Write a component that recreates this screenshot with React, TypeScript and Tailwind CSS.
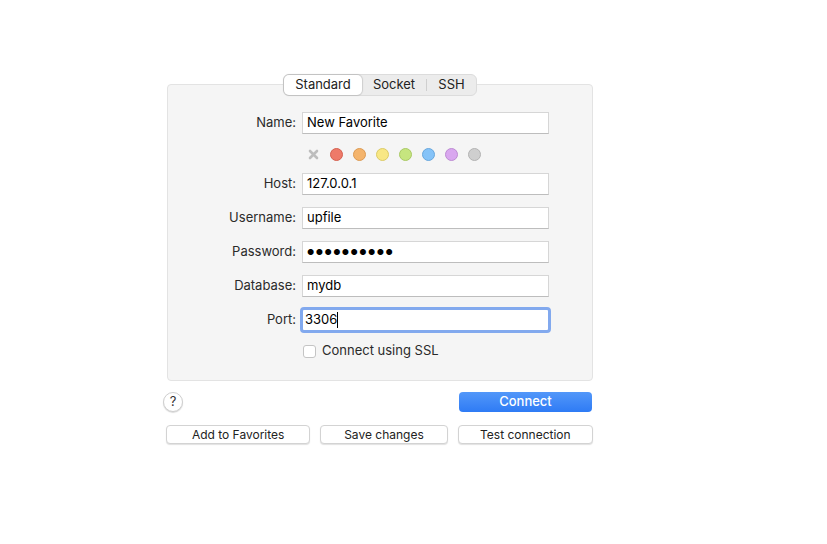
import { FC } from "react";

const swatches = [
  "bg-[#ee7a69] border-[#d5604f]",
  "bg-[#f4b46c] border-[#dc9a52]",
  "bg-[#f8e784] border-[#dccb66]",
  "bg-[#c6e57f] border-[#a9c964]",
  "bg-[#85c3f8] border-[#68a7dd]",
  "bg-[#d9a7ef] border-[#bd8bd3]",
  "bg-[#cfcfcf] border-[#b3b3b3]",
];

const Field: FC<{ label: string; value: string; focused?: boolean; password?: boolean }> = ({
  label,
  value,
  focused,
  password,
}) => (
  <div className="flex items-center h-[22px]">
    <div className="w-[129px] text-right pr-[1px] text-[13px] text-[#2a2a2a]">{label}</div>
    <div
      className={
        focused
          ? "ml-[5px] w-[247px] h-[22px] bg-white flex items-center pl-[3px] text-[13px] text-black rounded-[2px] outline-[3px] outline-[#82a9ee] outline -outline-offset-[1px]"
          : "ml-[5px] w-[247px] h-[22px] bg-white flex items-center pl-[4px] text-[13px] text-black border border-[#d6d6d6] border-b-[#bdbdbd]"
      }
    >
      {password ? (
        <span className="text-[8px] tracking-[1.4px]">{"●".repeat(10)}</span>
      ) : (
        <span>{value}</span>
      )}
      {focused && <span className="w-[1px] h-[16px] bg-black" />}
    </div>
  </div>
);

const SmallButton: FC<{ label: string; width: string }> = ({ label, width }) => (
  <div
    className={`${width} h-[19px] bg-white rounded-[4px] border border-[#d3d3d3] shadow-[0_1px_1px_rgba(0,0,0,0.12)] flex items-center justify-center text-[12px] text-[#222]`}
  >
    {label}
  </div>
);

export default function App() {
  return (
    <div
      className="w-[827px] h-[544px] bg-white"
      style={{ fontFamily: "Inter, 'Liberation Sans', sans-serif" }}
    >
      <div className="pt-[74px] pl-[167px] w-[593px]">
        {/* tabs */}
        <div className="flex justify-center relative z-10">
          <div className="flex items-center h-[22px] w-[194px] bg-[#ececec] border border-[#dcdcdc] rounded-[6px] text-[13px] text-[#222]">
            <div className="h-[20px] w-[78px] bg-white rounded-[5px] shadow-[0_0_1px_1px_rgba(0,0,0,0.13)] flex items-center justify-center">
              Standard
            </div>
            <div className="w-[64px] text-center">Socket</div>
            <div className="w-[1px] h-[12px] bg-[#cfcfcf]" />
            <div className="flex-1 text-center">SSH</div>
          </div>
        </div>

        {/* panel */}
        <div className="-mt-[12px] w-[426px] h-[297px] bg-[#f5f5f5] border border-[#e3e3e3] rounded-[4px] pt-[27px]">
          <div className="flex flex-col">
            <Field label="Name:" value="New Favorite" />

            <div className="flex items-center ml-[140px] mt-[13px] h-[14px]">
              <svg width="11" height="11" viewBox="0 0 11 11" className="mr-[11px]">
                <path d="M2 2 L9 9 M9 2 L2 9" stroke="#bdbdbd" strokeWidth="2.6" strokeLinecap="round" />
              </svg>
              <div className="flex gap-[10px]">
                {swatches.map((c) => (
                  <div key={c} className={`w-[13px] h-[13px] rounded-full border ${c}`} />
                ))}
              </div>
            </div>

            <div className="flex flex-col gap-[12px] mt-[12px]">
              <Field label="Host:" value="127.0.0.1" />
              <Field label="Username:" value="upfile" />
              <Field label="Password:" value="" password />
              <Field label="Database:" value="mydb" />
              <Field label="Port:" value="3306" focused />
            </div>

            <div className="flex items-center ml-[135px] mt-[13px] h-[14px]">
              <div className="w-[13px] h-[13px] bg-white border border-[#c4c4c4] rounded-[3px]" />
              <span className="ml-[6px] text-[13px] text-[#2a2a2a]">Connect using SSL</span>
            </div>
          </div>
        </div>

        {/* actions */}
        <div className="flex items-center justify-between mt-[11px] -ml-[4px] w-[430px]">
          <div className="w-[20px] h-[20px] rounded-full bg-white border border-[#cfcfcf] shadow-[0_1px_1px_rgba(0,0,0,0.15)] flex items-center justify-center text-[13px] text-[#333]">
            ?
          </div>
          <div className="w-[133px] h-[20px] rounded-[4px] bg-gradient-to-b from-[#5297f9] to-[#2e7bf5] text-white text-[13px] font-medium flex items-center justify-center mr-[1px]">
            Connect
          </div>
        </div>

        <div className="flex gap-[10px] mt-[13px] -ml-[1px]">
          <SmallButton label="Add to Favorites" width="w-[145px]" />
          <SmallButton label="Save changes" width="w-[128px]" />
          <SmallButton label="Test connection" width="w-[136px]" />
        </div>
      </div>
    </div>
  );
}
